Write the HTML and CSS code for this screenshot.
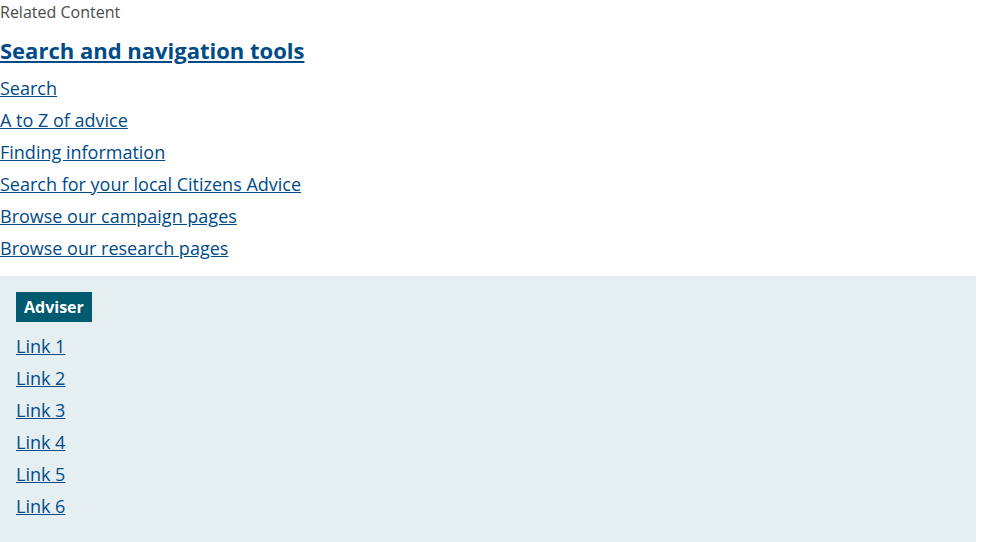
FILE: index.html
```html
<!DOCTYPE html>
<html lang="en">
<head>
<meta charset="utf-8">
<title>Related Content</title>
<link rel="stylesheet" href="styles.css">
</head>
<body>
<div class="page">
  <section class="related">
    <p class="label">Related Content</p>
    <h2 class="title"><a href="#">Search and navigation tools</a></h2>
    <ul class="links">
      <li><a href="#">Search</a></li>
      <li><a href="#">A to Z of advice</a></li>
      <li><a href="#">Finding information</a></li>
      <li><a href="#">Search for your local Citizens Advice</a></li>
      <li><a href="#">Browse our campaign pages</a></li>
      <li><a href="#">Browse our research pages</a></li>
    </ul>
  </section>
  <section class="adviser">
    <span class="badge">Adviser</span>
    <ul class="links">
      <li><a href="#">Link 1</a></li>
      <li><a href="#">Link 2</a></li>
      <li><a href="#">Link 3</a></li>
      <li><a href="#">Link 4</a></li>
      <li><a href="#">Link 5</a></li>
      <li><a href="#">Link 6</a></li>
    </ul>
  </section>
</div>
</body>
</html>
```
FILE: styles.css
```css
html, body {
  margin: 0;
  padding: 0;
  background: #fff;
}
body {
  font-family: "Open Sans", "Liberation Sans", sans-serif;
  color: #222;
}
.page {
  width: 976px;
}
.related {
  padding-bottom: 16px;
}
.label {
  margin: 0;
  font-size: 16px;
  line-height: 24px;
  color: #4a4a4a;
}
.title {
  margin: 8px 0 0;
  font-size: 22px;
  line-height: 36px;
  font-weight: 700;
}
.title a {
  color: #004b88;
}
.links {
  list-style: none;
  margin: 0;
  padding: 0;
}
.links li {
  margin-top: 8px;
  font-size: 18px;
  line-height: 24px;
}
.links a {
  color: #004b88;
  text-decoration: underline;
}
.adviser {
  background: #e5eef1;
  padding: 16px 16px 32px;
}
.badge {
  display: inline-block;
  background: #005a70;
  color: #fff;
  font-weight: 700;
  font-size: 16px;
  line-height: 30px;
  padding: 0 8px;
}
.adviser .links {
  padding-top: 4px;
}
```
